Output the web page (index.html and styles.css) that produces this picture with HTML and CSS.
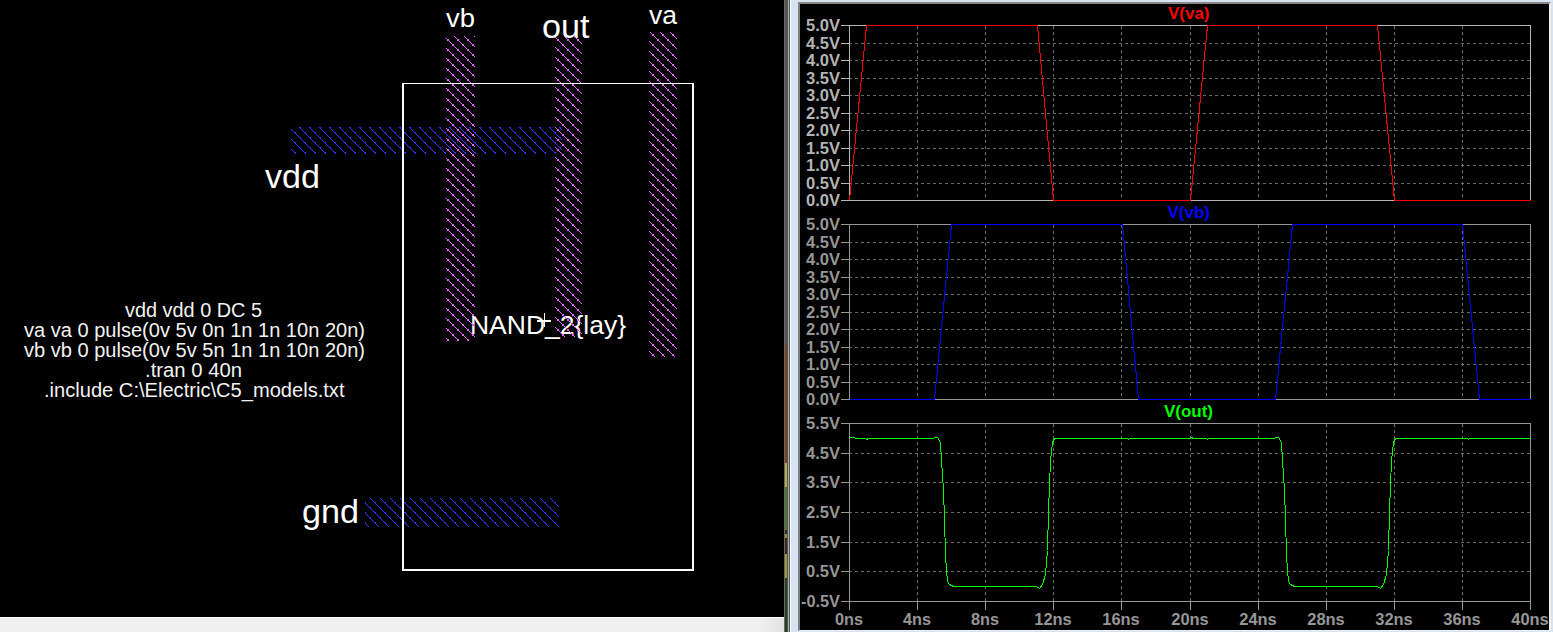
FILE: index.html
```
<!DOCTYPE html>
<html lang="en">
<head>
<meta charset="utf-8">
<title>NAND_2 layout and simulation</title>
<link rel="stylesheet" href="styles.css">
</head>
<body>
<main class="workspace">
  <section class="layout-pane">
    <svg class="layout-canvas" width="784" height="617" viewBox="0 0 784 617">
      <defs>
        <pattern id="poly" width="10" height="10" patternUnits="userSpaceOnUse">
          <path class="fill-poly" d="M8 0h1v1h-1zM9 1h1v1h-1zM0 2h1v1h-1zM1 3h1v1h-1zM2 4h2v2h-2zM4 6h1v1h-1zM5 7h1v1h-1zM6 8h1v1h-1zM7 9h2v1h-2zM7 0h2v1h-2z"/>
        </pattern>
        <pattern id="metal" width="10" height="10" patternUnits="userSpaceOnUse">
          <path class="fill-metal" d="M2 0h1v1h-1zM3 1h1v1h-1zM4 2h2v1h-2zM5 3h1v1h-1zM6 4h1v1h-1zM7 5h1v1h-1zM8 6h1v1h-1zM9 7h1v1h-1zM0 7h1v1h-1zM0 8h1v1h-1zM1 9h1v1h-1z"/>
        </pattern>
      </defs>
      <rect x="291" y="127" width="271" height="27" fill="url(#metal)"/>
      <rect x="365" y="498" width="194" height="29" fill="url(#metal)"/>
      <g class="label">
        <text x="446" y="27" font-size="26" textLength="29" lengthAdjust="spacingAndGlyphs">vb</text>
        <text x="542" y="38" font-size="33" textLength="47.500" lengthAdjust="spacingAndGlyphs">out</text>
        <text x="649" y="24" font-size="26" textLength="28" lengthAdjust="spacingAndGlyphs">va</text>
        <text x="265" y="188" font-size="33" textLength="55" lengthAdjust="spacingAndGlyphs">vdd</text>
        <text x="302" y="523" font-size="33" textLength="57" lengthAdjust="spacingAndGlyphs">gnd</text>
        <text x="470" y="334" font-size="26" textLength="156" lengthAdjust="spacingAndGlyphs">NAND_2{lay}</text>
      </g>
      <rect x="446" y="36" width="29" height="305" fill="url(#poly)"/>
      <rect x="555" y="36" width="27" height="301" fill="url(#poly)"/>
      <rect x="649" y="32" width="28" height="325" fill="url(#poly)"/>
      <path class="cell" d="M402 83H694V571H402ZM404 84V569H692V84Z"/>
      <path class="cell" d="M537 320h14v2h-14z"/>
      <path class="cell" d="M544 313h1v14h-1z"/>
      <g class="label netlist">
        <text x="125" y="317" textLength="137" lengthAdjust="spacingAndGlyphs">vdd vdd 0 DC 5</text>
        <text x="24" y="337" textLength="341" lengthAdjust="spacingAndGlyphs">va va 0 pulse(0v 5v 0n 1n 1n 10n 20n)</text>
        <text x="24" y="357" textLength="341" lengthAdjust="spacingAndGlyphs">vb vb 0 pulse(0v 5v 5n 1n 1n 10n 20n)</text>
        <text x="145" y="377" textLength="97" lengthAdjust="spacingAndGlyphs">.tran 0 40n</text>
        <text x="44" y="397" textLength="300.500" lengthAdjust="spacingAndGlyphs">.include C:\Electric\C5_models.txt</text>
      </g>
    </svg>
    <div class="status-strip"></div>
  </section>
  <div class="splitter"><i class="edge"></i><i class="desktop"></i><i class="rim"></i><i class="shade"></i><i class="glint"></i><i class="frame"></i></div>
  <section class="plot-pane">
    <svg class="plots" id="plots" width="749" height="626" viewBox="800 4 749 626"></svg>
  </section>
</main>
<script src="plots.js"></script>
</body>
</html>
```
FILE: styles.css
```
body {
  margin: 0;
  background: #000;
  overflow: hidden;
  font-family: "Liberation Sans", Arial, sans-serif;
}
.workspace { display: flex; width: 1553px; height: 632px; }
.layout-pane { display: flex; flex-direction: column; width: 784px; background: #000; }
.layout-canvas { display: block; }
.status-strip {
  flex: 1;
  border-top: 1px solid #fff;
  background: linear-gradient(90deg, #efefef 760px, #e2e2e2 784px);
}
.label { fill: #fff; }
.netlist { font-size: 20px; fill: #f2f2f2; }
.fill-poly { fill: #e066ff; shape-rendering: crispEdges; }
.fill-metal { fill: #3333ff; shape-rendering: crispEdges; }
.cell { fill: #fff; fill-rule: evenodd; shape-rendering: crispEdges; }

.splitter { display: flex; width: 14px; }
.edge { width: 1px; background: #666; }
.desktop {
  width: 2px;
  background: linear-gradient(#555 345px, #803f1c 345px 463px, #b5ae42 463px 487px, #59732b 487px 530px,
    #262d18 530px 534px, #8a9840 534px 538px, #35281f 538px 554px, #999a35 554px 578px, #29401f 578px);
}
.rim { width: 1px; background: #555; }
.shade { width: 1px; background: #aaa; }
.glint { width: 2px; background: linear-gradient(90deg, #555 1px, #fff 1px); }
.frame { width: 7px; background: #d6e3f2; }

.plot-pane {
  box-sizing: border-box;
  width: 755px;
  border-style: solid;
  border-width: 2px 2px 1px 0;
  border-color: #d6e3f2;
}
.plots {
  display: block;
  background: #000;
  border-style: solid;
  border-width: 2px 2px 1px 2px;
  border-color: #888 #f0f0f0 #f0f0f0 #808080;
}
.axis, .grid, .trace { fill: none; stroke-width: 1; shape-rendering: crispEdges; }
.grid { stroke: #686868; stroke-dasharray: 3 3; }
.tick, .title { font-size: 16px; font-weight: bold; }
.bright .axis { stroke: #b4b4b4; }
.dim .axis { stroke: #969696; }
.bright .tick { fill: #b4b4b4; }
.dim .tick { fill: #969696; }
.va .trace { stroke: #f00; }
.vb .trace { stroke: #00f; }
.out .trace { stroke: #0f0; }
.va .title { fill: #f00; }
.vb .title { fill: #00f; }
.out .title { fill: #0f0; }
```
FILE: plots.js
```
const NS = 'http://www.w3.org/2000/svg';
const root = document.getElementById('plots');
const LEFT = 849, RIGHT = 1530;
const xs = [849, 917, 985, 1053, 1121, 1190, 1258, 1326, 1394, 1462, 1530];
const volts = ['5.0V', '4.5V', '4.0V', '3.5V', '3.0V', '2.5V', '2.0V', '1.5V', '1.0V', '0.5V', '0.0V'];

function add(parent, name, attrs, text) {
  const el = document.createElementNS(NS, name);
  for (const key in attrs) el.setAttribute(key, attrs[key]);
  if (text) el.textContent = text;
  parent.appendChild(el);
  return el;
}

function plot(cls, title, titleX, titleW, ys, labels, points) {
  const g = add(root, 'g', { class: cls });
  const top = ys[0], bottom = ys[ys.length - 1];
  xs.slice(1, -1).forEach(x => add(g, 'path', { class: 'grid', d: `M${x + .5} ${top + 1}V${bottom}` }));
  ys.slice(1, -1).forEach(y => add(g, 'path', { class: 'grid', d: `M${LEFT} ${y + .5}H${RIGHT}` }));
  add(g, 'path', { class: 'axis', d: `M${LEFT + .5} ${top + .5}H${RIGHT + .5}V${bottom + .5}H${LEFT + .5}Z` });
  ys.forEach((y, i) => {
    add(g, 'path', { class: 'axis', d: `M841 ${y + .5}H${LEFT}` });
    const w = labels[i][0] === '-' ? 39 : 34;
    add(g, 'text', { class: 'tick', x: 840 - w, y: y + 6, textLength: w, lengthAdjust: 'spacingAndGlyphs' }, labels[i]);
  });
  add(g, 'text', { class: 'title', x: titleX, y: top - 6, textLength: titleW, lengthAdjust: 'spacingAndGlyphs' }, title);
  add(g, 'polyline', { class: 'trace', points: points.map(p => `${p[0] + .5},${p[1] + .5}`).join(' ') });
  return g;
}

const half = [25, 43, 60, 78, 95, 113, 130, 148, 165, 183, 200];
plot('va bright', 'V(va)', 1168, 41.5, half, volts,
  [[849, 200], [866, 25], [1037, 25], [1053, 200], [1190, 200], [1207, 25], [1377, 25], [1394, 200], [1530, 200]]);
plot('vb dim', 'V(vb)', 1167.5, 42.5, half.map(y => y + 199), volts,
  [[849, 399], [934, 399], [951, 224], [1122, 224], [1138, 399], [1275, 399], [1292, 224], [1462, 224], [1479, 399], [1530, 399]]);

const pulse = [[1274, 438], [1275, 437], [1278, 437], [1280, 440], [1281, 443], [1282, 460], [1284, 490], [1285, 518],
  [1286, 555], [1287, 570], [1288, 581], [1290, 584], [1294, 586], [1377, 586], [1380, 588], [1383, 584],
  [1386, 574], [1388, 550], [1389, 510], [1390, 485], [1391, 460], [1393, 442], [1395, 438]];
const out = plot('out dim', 'V(out)', 1164, 49, [423, 453, 482, 512, 542, 571, 601],
  ['5.5V', '4.5V', '3.5V', '2.5V', '1.5V', '0.5V', '-0.5V'],
  [[849, 437], [854, 437], [855, 438], [865, 438], [866, 439], [868, 438],
    ...pulse.map(([x, y]) => [x - 341, y]),
    [1127, 438], [1128, 439], [1129, 438], [1190, 438], [1191, 437], [1193, 438], [1206, 438], [1207, 439], [1208, 438],
    ...pulse, [1467, 438], [1468, 439], [1469, 438], [1530, 438]]);

xs.forEach((x, i) => {
  const label = `${i * 4}ns`;
  const w = label.length === 3 ? 28 : 37.5;
  add(out, 'path', { class: 'axis', d: `M${x + .5} 601V610` });
  add(out, 'text', { class: 'tick', x: x - w / 2, y: 625, textLength: w, lengthAdjust: 'spacingAndGlyphs' }, label);
});
```
